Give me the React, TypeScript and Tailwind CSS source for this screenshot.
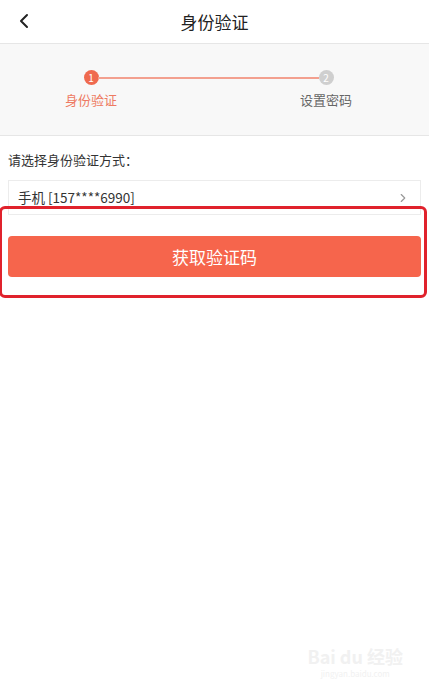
import { ChevronLeft, ChevronRight } from "lucide-react";

const font = "font-['Noto_Sans_CJK_SC','Noto_Sans',sans-serif]";

function Steps() {
  return (
    <div className="flex items-start border-b border-[#e6e6e6] bg-[#f8f8f8] pl-[65px] pr-[77px] pt-[26px] pb-[26px]">
      <div className="flex w-[52px] flex-col items-center">
        <span className="flex h-[15px] w-[15px] items-center justify-center rounded-full bg-[#ef6a4f] text-[10px] leading-none text-white">
          1
        </span>
        <span className="mt-[6px] whitespace-nowrap text-[13px] leading-[18px] text-[#ee7a62]">身份验证</span>
      </div>
      <div className="relative z-0 mx-[-19px] mt-[7px] h-[1.5px] flex-1 bg-[#f3a08f]" />
      <div className="flex w-[52px] flex-col items-center">
        <span className="relative z-10 flex h-[15px] w-[15px] items-center justify-center rounded-full bg-[#cfcfcf] text-[10px] leading-none text-white">
          2
        </span>
        <span className="mt-[6px] whitespace-nowrap text-[13px] leading-[18px] text-[#666]">设置密码</span>
      </div>
    </div>
  );
}

export default function App() {
  return (
    <div className={`relative h-[689px] w-[429px] overflow-hidden bg-white ${font}`}>
      <header className="relative flex h-[44px] items-center justify-center border-b border-[#e6e6e6]">
        <ChevronLeft className="absolute left-[12px] top-[9px] h-[24px] w-[24px] text-[#222]" strokeWidth={2} />
        <h1 className="text-[17px] text-[#222]">身份验证</h1>
      </header>

      <Steps />

      <div className="px-[8px]">
        <p className="mt-[15px] text-[13px] leading-[18px] text-[#333]">请选择身份验证方式：</p>
        <div className="mt-[11px] flex h-[35px] items-center justify-between border border-[#ececec] pl-[9px] pr-[10px]">
          <span className="text-[13.5px] text-[#333]">手机 [157****6990]</span>
          <ChevronRight className="h-[14px] w-[14px] text-[#999]" strokeWidth={2} />
        </div>
        <button className="mt-[21px] flex h-[41px] w-full items-center justify-center rounded-[4px] bg-[#f6654c] text-[17px] text-white">
          获取验证码
        </button>
      </div>

      {/* 红色标注框 */}
      <div className="pointer-events-none absolute left-[-1px] top-[206px] h-[92px] w-[428px] rounded-[6px] border-[3px] border-[#e0222c]" />

      <div className="absolute bottom-[10px] right-[26px] flex flex-col items-center gap-[3px] text-[#f1f1f1]">
        <div className="text-[18px] font-bold leading-[20px]">Bai du 经验</div>
        <div className="text-[8px] leading-[10px]">jingyan.baidu.com</div>
      </div>
    </div>
  );
}
